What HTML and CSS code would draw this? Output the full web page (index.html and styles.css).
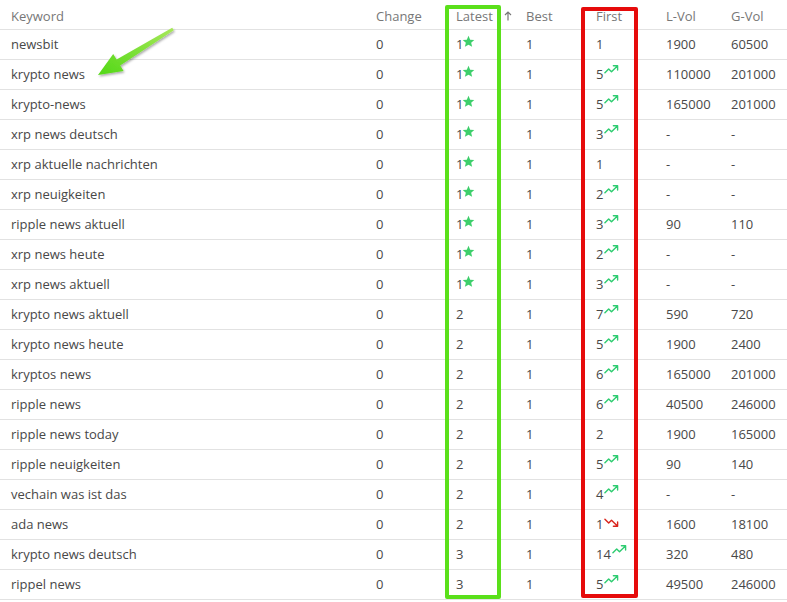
FILE: index.html
```html
<!DOCTYPE html>
<html>
<head>
<meta charset="utf-8">
<link rel="stylesheet" href="styles.css">
</head>
<body>
<div class="wrap">
<table class="kw">
<colgroup>
<col class="c-kw"><col class="c-ch"><col class="c-la"><col class="c-be"><col class="c-fi"><col class="c-lv"><col class="c-gv">
</colgroup>
<thead>
<tr><th>Keyword</th><th>Change</th><th>Latest<svg class="sort" viewBox="0 0 8 10"><path d="M4 9.5V1M1 4l3-3 3 3"/></svg></th><th>Best</th><th>First</th><th>L-Vol</th><th>G-Vol</th></tr>
</thead>
<tbody>
<tr><td>newsbit</td><td>0</td><td>1<svg class="star" viewBox="0 0 24 24"><path d="M12 1.5l3.1 7.1 7.6.7-5.8 5 1.8 7.5L12 17.8l-6.7 4 1.8-7.5-5.8-5 7.6-.7z"/></svg></td><td>1</td><td>1</td><td>1900</td><td>60500</td></tr>
<tr><td>krypto news</td><td>0</td><td>1<svg class="star" viewBox="0 0 24 24"><path d="M12 1.5l3.1 7.1 7.6.7-5.8 5 1.8 7.5L12 17.8l-6.7 4 1.8-7.5-5.8-5 7.6-.7z"/></svg></td><td>1</td><td>5<svg class="up" viewBox="0 0 16 10"><path d="M1 9l4-4 3 3 6-6M10 1.5h4.5V6"/></svg></td><td>110000</td><td>201000</td></tr>
<tr><td>krypto-news</td><td>0</td><td>1<svg class="star" viewBox="0 0 24 24"><path d="M12 1.5l3.1 7.1 7.6.7-5.8 5 1.8 7.5L12 17.8l-6.7 4 1.8-7.5-5.8-5 7.6-.7z"/></svg></td><td>1</td><td>5<svg class="up" viewBox="0 0 16 10"><path d="M1 9l4-4 3 3 6-6M10 1.5h4.5V6"/></svg></td><td>165000</td><td>201000</td></tr>
<tr><td>xrp news deutsch</td><td>0</td><td>1<svg class="star" viewBox="0 0 24 24"><path d="M12 1.5l3.1 7.1 7.6.7-5.8 5 1.8 7.5L12 17.8l-6.7 4 1.8-7.5-5.8-5 7.6-.7z"/></svg></td><td>1</td><td>3<svg class="up" viewBox="0 0 16 10"><path d="M1 9l4-4 3 3 6-6M10 1.5h4.5V6"/></svg></td><td>-</td><td>-</td></tr>
<tr><td>xrp aktuelle nachrichten</td><td>0</td><td>1<svg class="star" viewBox="0 0 24 24"><path d="M12 1.5l3.1 7.1 7.6.7-5.8 5 1.8 7.5L12 17.8l-6.7 4 1.8-7.5-5.8-5 7.6-.7z"/></svg></td><td>1</td><td>1</td><td>-</td><td>-</td></tr>
<tr><td>xrp neuigkeiten</td><td>0</td><td>1<svg class="star" viewBox="0 0 24 24"><path d="M12 1.5l3.1 7.1 7.6.7-5.8 5 1.8 7.5L12 17.8l-6.7 4 1.8-7.5-5.8-5 7.6-.7z"/></svg></td><td>1</td><td>2<svg class="up" viewBox="0 0 16 10"><path d="M1 9l4-4 3 3 6-6M10 1.5h4.5V6"/></svg></td><td>-</td><td>-</td></tr>
<tr><td>ripple news aktuell</td><td>0</td><td>1<svg class="star" viewBox="0 0 24 24"><path d="M12 1.5l3.1 7.1 7.6.7-5.8 5 1.8 7.5L12 17.8l-6.7 4 1.8-7.5-5.8-5 7.6-.7z"/></svg></td><td>1</td><td>3<svg class="up" viewBox="0 0 16 10"><path d="M1 9l4-4 3 3 6-6M10 1.5h4.5V6"/></svg></td><td>90</td><td>110</td></tr>
<tr><td>xrp news heute</td><td>0</td><td>1<svg class="star" viewBox="0 0 24 24"><path d="M12 1.5l3.1 7.1 7.6.7-5.8 5 1.8 7.5L12 17.8l-6.7 4 1.8-7.5-5.8-5 7.6-.7z"/></svg></td><td>1</td><td>2<svg class="up" viewBox="0 0 16 10"><path d="M1 9l4-4 3 3 6-6M10 1.5h4.5V6"/></svg></td><td>-</td><td>-</td></tr>
<tr><td>xrp news aktuell</td><td>0</td><td>1<svg class="star" viewBox="0 0 24 24"><path d="M12 1.5l3.1 7.1 7.6.7-5.8 5 1.8 7.5L12 17.8l-6.7 4 1.8-7.5-5.8-5 7.6-.7z"/></svg></td><td>1</td><td>3<svg class="up" viewBox="0 0 16 10"><path d="M1 9l4-4 3 3 6-6M10 1.5h4.5V6"/></svg></td><td>-</td><td>-</td></tr>
<tr><td>krypto news aktuell</td><td>0</td><td>2</td><td>1</td><td>7<svg class="up" viewBox="0 0 16 10"><path d="M1 9l4-4 3 3 6-6M10 1.5h4.5V6"/></svg></td><td>590</td><td>720</td></tr>
<tr><td>krypto news heute</td><td>0</td><td>2</td><td>1</td><td>5<svg class="up" viewBox="0 0 16 10"><path d="M1 9l4-4 3 3 6-6M10 1.5h4.5V6"/></svg></td><td>1900</td><td>2400</td></tr>
<tr><td>kryptos news</td><td>0</td><td>2</td><td>1</td><td>6<svg class="up" viewBox="0 0 16 10"><path d="M1 9l4-4 3 3 6-6M10 1.5h4.5V6"/></svg></td><td>165000</td><td>201000</td></tr>
<tr><td>ripple news</td><td>0</td><td>2</td><td>1</td><td>6<svg class="up" viewBox="0 0 16 10"><path d="M1 9l4-4 3 3 6-6M10 1.5h4.5V6"/></svg></td><td>40500</td><td>246000</td></tr>
<tr><td>ripple news today</td><td>0</td><td>2</td><td>1</td><td>2</td><td>1900</td><td>165000</td></tr>
<tr><td>ripple neuigkeiten</td><td>0</td><td>2</td><td>1</td><td>5<svg class="up" viewBox="0 0 16 10"><path d="M1 9l4-4 3 3 6-6M10 1.5h4.5V6"/></svg></td><td>90</td><td>140</td></tr>
<tr><td>vechain was ist das</td><td>0</td><td>2</td><td>1</td><td>4<svg class="up" viewBox="0 0 16 10"><path d="M1 9l4-4 3 3 6-6M10 1.5h4.5V6"/></svg></td><td>-</td><td>-</td></tr>
<tr><td>ada news</td><td>0</td><td>2</td><td>1</td><td>1<svg class="down" viewBox="0 0 16 10"><path d="M1 1l4 4 3-3 6 6M10 8.5h4.5V4"/></svg></td><td>1600</td><td>18100</td></tr>
<tr><td>krypto news deutsch</td><td>0</td><td>3</td><td>1</td><td>14<svg class="up" viewBox="0 0 16 10"><path d="M1 9l4-4 3 3 6-6M10 1.5h4.5V6"/></svg></td><td>320</td><td>480</td></tr>
<tr><td>rippel news</td><td>0</td><td>3</td><td>1</td><td>5<svg class="up" viewBox="0 0 16 10"><path d="M1 9l4-4 3 3 6-6M10 1.5h4.5V6"/></svg></td><td>49500</td><td>246000</td></tr>
</tbody>
</table>
<div class="box box-green"></div>
<div class="box box-red"></div>
<svg class="pointer" viewBox="0 0 200 100" width="200" height="100">
<defs>
<linearGradient id="g" x1="1" y1="0" x2="0" y2="1">
<stop offset="0" stop-color="#a8e85a"/>
<stop offset="1" stop-color="#52d816"/>
</linearGradient>
<filter id="sh" x="-20%" y="-20%" width="140%" height="140%"><feDropShadow dx="1" dy="1.5" stdDeviation="1.2" flood-color="#000" flood-opacity="0.35"/></filter>
</defs>
<path filter="url(#sh)" fill="url(#g)" d="M98 75 L113.2 54 L116.6 59.5 L172.2 27.7 L173.8 30.3 L120.2 65.5 L123.6 71 Z"/>
</svg>
</div>
</body>
</html>
```
FILE: styles.css
```css
html, body {
  margin: 0;
  padding: 0;
  background: #fff;
}
.wrap {
  position: relative;
  width: 787px;
}
.kw {
  width: 787px;
  border-collapse: collapse;
  table-layout: fixed;
  font-family: "Open Sans", "Liberation Sans", sans-serif;
  font-size: 13px;
  color: #484848;
}
.c-kw { width: 366px; }
.c-ch { width: 80px; }
.c-la { width: 70px; }
.c-be { width: 70px; }
.c-fi { width: 70px; }
.c-lv { width: 65px; }
.c-gv { width: 66px; }
.kw th, .kw td {
  text-align: left;
  border-bottom: 1px solid #e2e2e2;
  white-space: nowrap;
}
.kw td {
  height: 27px;
  padding: 0 0 2px 10px;
}
.kw th {
  height: 26px;
  padding: 3px 0 0 10px;
  font-weight: 400;
  color: #777;
}
.kw th:first-child, .kw td:first-child {
  padding-left: 11px;
}
.sort {
  width: 8px;
  height: 10px;
  margin-left: 11px;
  fill: none;
  stroke: #777;
  stroke-width: 1.2;
  vertical-align: 0;
}
.star {
  width: 13px;
  height: 13px;
  fill: #3ecf6b;
  vertical-align: 1px;
  margin-left: -1px;
}
.up, .down {
  width: 15px;
  height: 10px;
  fill: none;
  stroke-width: 1.5;
  stroke-linecap: round;
  stroke-linejoin: round;
  vertical-align: 5px;
  margin-left: 1px;
}
.up { stroke: #2ecc71; }
.down { stroke: #d9241c; vertical-align: 1px; }
.box {
  position: absolute;
  box-sizing: border-box;
  border-radius: 2px;
}
.box-green {
  left: 445px;
  top: 5px;
  width: 56px;
  height: 594px;
  border: 4px solid #5ae01a;
}
.box-red {
  left: 581px;
  top: 7px;
  width: 57px;
  height: 591px;
  border: 4px solid #e60b0b;
}
.pointer {
  position: absolute;
  left: 0;
  top: 0;
}
```
